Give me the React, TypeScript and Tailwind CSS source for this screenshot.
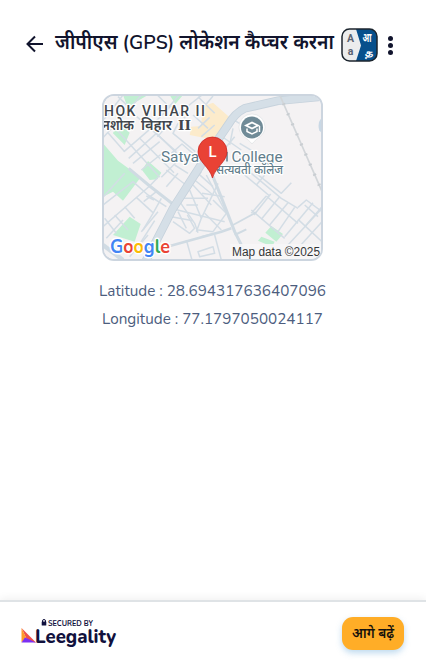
import type { ReactNode } from 'react'

const LATITUDE = '28.694317636407096'
const LONGITUDE = '77.1797050024117'

export default function App() {
  return (
    <div className="flex h-screen flex-col bg-white font-['Nunito','Noto_Sans','Noto_Sans_Devanagari',sans-serif]">
      <header className="flex h-[88px] shrink-0 items-center pl-[26px] pr-[31px]">
        <button aria-label="Back" className="shrink-0 text-[#11142d]">
          <BackIcon />
        </button>
        <h1 className="ml-[11px] w-[280px] shrink-0">
          <FitText width={279} height={36} baseline={23} size={20} weight={600} color="#11142d">
            जीपीएस (GPS) लोकेशन कैप्चर करना
          </FitText>
        </h1>
        <button aria-label="Language" className="ml-[6px] mt-[2px] shrink-0">
          <LanguageIcon />
        </button>
        <button aria-label="More" className="ml-[10px] mt-[2px] flex shrink-0 flex-col gap-[2px]">
          <span className="size-[5px] rounded-full bg-[#11142d]" />
          <span className="size-[5px] rounded-full bg-[#11142d]" />
          <span className="size-[5px] rounded-full bg-[#11142d]" />
        </button>
      </header>

      <main className="flex flex-1 flex-col items-center pr-px pt-[6px]">
        <div className="h-[167px] w-[221px] overflow-hidden rounded-[12px] border-2 border-[#ccd5df]">
          <LocationMap />
        </div>
        <div className="mt-[16px] flex flex-col items-center">
          <FitText width={227} height={28} baseline={19} size={16} color="#4c5d7e">
            {`Latitude : ${LATITUDE}`}
          </FitText>
          <FitText width={221} height={28} baseline={19} size={16} color="#4c5d7e">
            {`Longitude : ${LONGITUDE}`}
          </FitText>
        </div>
      </main>

      <footer className="flex h-[64px] shrink-0 items-center justify-between border-t-2 border-[#dfe3e6] pl-[20px] pr-[22px] shadow-[0_-2px_8px_rgba(0,0,0,0.06)]">
        <LeegalityLogo />
        <button className="flex h-[33px] w-[62px] items-center justify-center rounded-[11px] bg-[#ffad27] shadow-[0_3px_6px_rgba(70,150,210,0.35)]">
          <FitText width={42} height={30} baseline={20} size={14} weight={600} color="#15120c">
            आगे बढ़ें
          </FitText>
        </button>
      </footer>
    </div>
  )
}

type FitTextProps = {
  width: number
  height: number
  baseline: number
  size: number
  weight?: number
  color: string
  children: ReactNode
}

// One line of text that always takes the same width
function FitText({ width, height, baseline, size, weight = 400, color, children }: FitTextProps) {
  return (
    <svg width={width} height={height} className="block overflow-visible">
      <text x="0" y={baseline} fontSize={size} fontWeight={weight} fill={color} textLength={width} lengthAdjust="spacingAndGlyphs">
        {children}
      </text>
    </svg>
  )
}

function BackIcon() {
  return (
    <svg width="18" height="18" viewBox="0 0 18 18" fill="none" stroke="currentColor" strokeWidth="2" className="block">
      <path d="M17 9H2M9 1.5 1.5 9 9 16.5" />
    </svg>
  )
}

function LanguageIcon() {
  return (
    <svg width="37" height="34" viewBox="0 0 37 34" className="block">
      <rect x="1" y="1" width="35" height="32" rx="7.5" fill="#eceded" />
      <path d="M15 1h13.500a7.500 7.500 0 0 1 7.500 7.500v17a7.500 7.500 0 0 1-7.500 7.500H15l5-15.500z" fill="#07508c" />
      <rect x="1" y="1" width="35" height="32" rx="7.500" fill="none" stroke="#1c252e" strokeWidth="1.500" />
      <g textAnchor="middle" fontWeight="700">
        <g fontSize="10.500" fill="#596372" className="font-['Roboto',sans-serif]">
          <text x="9.500" y="14">A</text>
          <text x="9.500" y="27">a</text>
        </g>
        <text x="26" y="14" fontSize="12" fill="#fff" textLength="9" lengthAdjust="spacingAndGlyphs">आ</text>
        <text x="27.500" y="27.500" fontSize="11" fill="#fff" textLength="8" lengthAdjust="spacingAndGlyphs">த</text>
      </g>
    </svg>
  )
}

function LeegalityLogo() {
  return (
    <svg width="98" height="32" viewBox="20 616 98 32" className="block overflow-visible">
      <path d="M42.500 621v-1a1.500 1.500 0 0 1 3 0v1" fill="none" stroke="#11113d" />
      <rect x="41.700" y="620.500" width="4.600" height="4" rx=".5" fill="#11113d" />
      <text x="48" y="624.500" fontSize="7" fontWeight="700" fill="#11113d" textLength="45" lengthAdjust="spacingAndGlyphs">
        SECURED BY
      </text>
      <path d="M21.500 627 36 641.500 27.500 640z" fill="#ef4f4a" />
      <path d="M21.500 627 26 636.500 21.500 641.500z" fill="#ff9b29" />
      <path d="M21.500 641.500 25 636.500 36 641.500z" fill="#7b2ff2" />
      <text x="35" y="641.500" fontSize="19" fontWeight="800" fill="#11113d" textLength="81" lengthAdjust="spacingAndGlyphs">
        Leegality
      </text>
    </svg>
  )
}

const streets = [
  // north west
  'M15 92 75 15', 'M15 143 100 50 130 15', 'M95 62 140 100', 'M60 20 100 58', 'M178 15 215 52 150 118', 'M243 15 205 60',
  'M215 45 262 85', 'M270 48 312 15', 'M300 20 350 70', 'M345 18 325 42', 'M55 118 185 262', 'M30 128 80 185',
  'M78 185 155 118', 'M92 205 175 130 262 215', 'M105 220 185 155', 'M125 145 228 248', 'M130 240 205 180', 'M160 118 235 185',
  'M205 110 178 140', 'M220 190 252 162 290 195', 'M205 240 260 282', 'M230 225 270 250', 'M190 262 232 220', 'M205 290 240 250',
  'M240 100 225 130 292 185', 'M285 75 330 115', 'M300 115 335 82', 'M310 140 350 105',
  // south west
  'M15 322 80 250', 'M15 345 105 275 150 315', 'M15 410 155 288 180 262', 'M50 375 90 420', 'M80 350 110 385', 'M20 385 55 430',
  'M25 445 75 390', 'M115 322 165 368', 'M150 315 205 350', 'M137 335 175 305', 'M190 325 165 370 135 420', 'M145 318 168 330',
  'M130 425 180 365', 'M95 500 150 435', 'M120 470 170 392',
  // between the main road and the pin
  'M310 245 290 270 345 315', 'M285 285 340 345', 'M275 300 310 385', 'M255 325 330 325', 'M245 335 290 400 300 428',
  'M325 255 385 370', 'M360 280 310 385 295 425', 'M312 310 380 320', 'M265 345 300 345', 'M230 358 380 395', 'M220 380 285 392',
  'M240 365 265 415', 'M268 375 290 415 275 430 225 395', 'M320 370 370 420', 'M345 330 385 370 345 425', 'M300 250 345 290',
  'M300 420 345 425', 'M310 440 350 430', 'M300 485 345 470 350 490 305 500z', 'M265 450 282 510', 'M350 435 370 510',
  // east
  'M440 255 515 318', 'M460 250 550 325 600 355', 'M475 250 550 310 580 278', 'M500 255 475 285', 'M505 318 460 370',
  'M505 318 600 400', 'M460 360 560 445', 'M468 375 518 312', 'M490 388 545 320', 'M515 405 570 338', 'M540 425 590 352',
  'M560 440 645 338', 'M600 352 625 330 672 365', 'M600 388 672 455', 'M672 355 565 470', 'M672 395 595 480',
  'M620 345 660 380', 'M620 410 672 350',
  // around the college
  'M345 165 370 185', 'M365 135 430 180', 'M405 115 395 165', 'M410 140 385 170', 'M425 160 475 190', 'M400 85 440 110',
]

function LocationMap() {
  return (
    <svg width="218" height="163" viewBox="104 96 218 163" className="block">
      <rect x="100" y="90" width="228" height="176" fill="#f4f2f3" />
      <g transform="translate(98 90) scale(.33333)">
        <g fill="#c1efd2">
          <path d="M15 160 60 212 128 262 75 332 45 305 15 320zM150 213 190 248 178 268 155 270 132 240zM95 380 128 402 110 455 45 435zM58 95 95 128 80 165 45 130zM90 55 115 35 150 15 75 15zM215 15 255 15 232 42zM520 408 555 432 535 455 502 428zM490 440 530 455 522 470 480 452z" />
        </g>
        <g fill="#fcebcb">
          <path d="M312 50 345 38 398 85 385 120 340 148 275 135 280 110 310 108z" />
        </g>
        <g fill="none" stroke="#d3dde5" strokeWidth="4.500" strokeLinejoin="round">
          {streets.map((d) => (
            <path key={d} d={d} />
          ))}
        </g>
        <g fill="none" stroke="#d0dbe3">
          <path d="M345 260 375 335 410 425 455 515" strokeWidth="9" />
          <path d="M180 478 370 425 400 415" strokeWidth="8" />
          <path d="M405 405 475 367" strokeWidth="5" />
          <path d="M92 235 155 288 232 348" strokeWidth="9" />
          <path d="M15 465 75 510" strokeWidth="13" />
          <path d="M410 435 445 418" strokeWidth="6" />
        </g>
        <path d="M690 18 540 32 440 55Q412 68 390 105L315 215 225 355 140 520" fill="none" stroke="#c6d2dc" strokeWidth="26" />
        <path d="M690 18 540 32 440 55Q412 68 390 105L315 215 225 355 140 520" fill="none" stroke="#d5dfe7" strokeWidth="21" />
        <path d="M543 10 678 318" stroke="#d2d6d9" strokeWidth="5" />
        <path d="M543 10 678 318" stroke="#c8cdd1" strokeWidth="10" strokeDasharray="5 28" />
        <path d="M675 80Q656 95 664 122L675 130z" fill="#c9d8e5" />
      </g>

      {/* Area labels */}
      <g paintOrder="stroke" stroke="#fff" strokeWidth="2.500" strokeLinejoin="round">
        <text x="104" y="115.500" fontSize="14" fontWeight="500" fill="#41464d" textLength="101" className="font-['Roboto',sans-serif]">
          HOK VIHAR II
        </text>
        <g fontSize="14" fontWeight="600" fill="#41464d">
          <text x="102" y="130" textLength="32" lengthAdjust="spacingAndGlyphs">नशोक</text>
          <text x="141" y="130" textLength="31" lengthAdjust="spacingAndGlyphs">विहार</text>
          <text x="178" y="130" fontSize="13" fontWeight="700" textLength="13" lengthAdjust="spacingAndGlyphs" className="font-['DejaVu_Serif','Liberation_Serif',serif]">II</text>
        </g>
        <g fontSize="14.500" fill="#617d8b" className="font-['Roboto',sans-serif]">
          <text x="161" y="161.500" textLength="38" lengthAdjust="spacingAndGlyphs">Satya</text>
          <path d="M227 152v9.500" stroke="#617d8b" strokeWidth="1.500" />
          <text x="231.500" y="161.500" textLength="51" lengthAdjust="spacingAndGlyphs">College</text>
        </g>
        <text x="216" y="174" fontSize="12.500" fontWeight="500" fill="#617d8b" textLength="67" lengthAdjust="spacingAndGlyphs">
          सत्यवती कॉलेज
        </text>
      </g>

      {/* College marker */}
      <path d="M252 144C248 138 239 136 239 127a13 13 0 0 1 26 0c0 9-9 11-13 17z" fill="#fff" stroke="#d5d8da" strokeWidth=".5" />
      <circle cx="252" cy="127.500" r="11" fill="#708b97" />
      <path d="m244 125.500 8-4 8 4-8 4z" fill="#fff" />
      <path d="M247 128.500v3l5 2.500 5-2.500v-3M259.500 126v6" fill="none" stroke="#fff" strokeWidth="1.500" />
      <path d="m248 125.500 4-2 4 2-4 2z" fill="#708b97" />

      {/* Current position */}
      <path d="M212.500 178C209 166 198 162 198 151.500a14.500 14.500 0 0 1 29 0C227 162 216 166 212.500 178z" fill="#e94235" stroke="#c5221f" strokeWidth=".7" />
      <text x="212.500" y="157" fontSize="15" fontWeight="500" fill="#fff" textAnchor="middle" className="font-['Roboto',sans-serif]">L</text>

      <text x="110" y="252.500" fontSize="19" fontWeight="700" paintOrder="stroke" stroke="#fff" strokeWidth="3" textLength="60" lengthAdjust="spacingAndGlyphs">
        <tspan fill="#4285f4">G</tspan><tspan fill="#ea4335">o</tspan><tspan fill="#fbbc05">o</tspan><tspan fill="#4285f4">g</tspan><tspan fill="#34a853">l</tspan><tspan fill="#ea4335">e</tspan>
      </text>
      <rect x="230" y="244" width="96" height="18" fill="#f7f6f7" opacity=".9" />
      <text x="232" y="255.500" fontSize="12" fill="#343638" textLength="88" lengthAdjust="spacingAndGlyphs" className="font-['Liberation_Sans',sans-serif]">
        Map data ©2025
      </text>
    </svg>
  )
}
